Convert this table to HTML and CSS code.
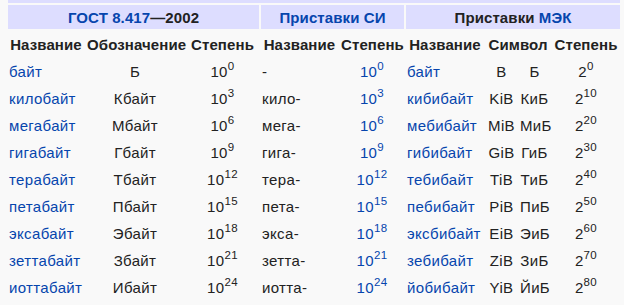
FILE: index.html
```html
<!DOCTYPE html>
<html lang="ru">
<head>
<meta charset="utf-8">
<link rel="stylesheet" href="styles.css">
</head>
<body>
<table class="units">
  <colgroup>
    <col class="c1"><col class="c2"><col class="c3"><col class="c4"><col class="c5"><col class="c6"><col class="c7"><col class="c8"><col class="c9">
  </colgroup>
  <tr class="strip"><th colspan="9"></th></tr>
  <tr class="group">
    <th colspan="3"><a href="#">ГОСТ 8.417</a>—2002</th>
    <th colspan="2"><a href="#">Приставки СИ</a></th>
    <th colspan="4">Приставки <a href="#">МЭК</a></th>
  </tr>
  <tr class="heads">
    <th>Название</th><th>Обозначение</th><th>Степень</th>
    <th>Название</th><th>Степень</th>
    <th>Название</th><th colspan="2">Символ</th><th>Степень</th>
  </tr>
  <tr>
    <td class="l"><a href="#">байт</a></td><td class="c">Б</td><td class="c">10<sup>0</sup></td>
    <td class="l">-</td><td class="c"><a href="#">10<sup>0</sup></a></td>
    <td class="l"><a href="#">байт</a></td><td class="c">B</td><td class="c">Б</td><td class="c">2<sup>0</sup></td>
  </tr>
  <tr>
    <td class="l"><a href="#">килобайт</a></td><td class="c">Кбайт</td><td class="c">10<sup>3</sup></td>
    <td class="l">кило-</td><td class="c"><a href="#">10<sup>3</sup></a></td>
    <td class="l"><a href="#">кибибайт</a></td><td class="c">KiB</td><td class="c">КиБ</td><td class="c">2<sup>10</sup></td>
  </tr>
  <tr>
    <td class="l"><a href="#">мегабайт</a></td><td class="c">Мбайт</td><td class="c">10<sup>6</sup></td>
    <td class="l">мега-</td><td class="c"><a href="#">10<sup>6</sup></a></td>
    <td class="l"><a href="#">мебибайт</a></td><td class="c">MiB</td><td class="c">МиБ</td><td class="c">2<sup>20</sup></td>
  </tr>
  <tr>
    <td class="l"><a href="#">гигабайт</a></td><td class="c">Гбайт</td><td class="c">10<sup>9</sup></td>
    <td class="l">гига-</td><td class="c"><a href="#">10<sup>9</sup></a></td>
    <td class="l"><a href="#">гибибайт</a></td><td class="c">GiB</td><td class="c">ГиБ</td><td class="c">2<sup>30</sup></td>
  </tr>
  <tr>
    <td class="l"><a href="#">терабайт</a></td><td class="c">Тбайт</td><td class="c">10<sup>12</sup></td>
    <td class="l">тера-</td><td class="c"><a href="#">10<sup>12</sup></a></td>
    <td class="l"><a href="#">тебибайт</a></td><td class="c">TiB</td><td class="c">ТиБ</td><td class="c">2<sup>40</sup></td>
  </tr>
  <tr>
    <td class="l"><a href="#">петабайт</a></td><td class="c">Пбайт</td><td class="c">10<sup>15</sup></td>
    <td class="l">пета-</td><td class="c"><a href="#">10<sup>15</sup></a></td>
    <td class="l"><a href="#">пебибайт</a></td><td class="c">PiB</td><td class="c">ПиБ</td><td class="c">2<sup>50</sup></td>
  </tr>
  <tr>
    <td class="l"><a href="#">эксабайт</a></td><td class="c">Эбайт</td><td class="c">10<sup>18</sup></td>
    <td class="l">экса-</td><td class="c"><a href="#">10<sup>18</sup></a></td>
    <td class="l"><a href="#">эксбибайт</a></td><td class="c">EiB</td><td class="c">ЭиБ</td><td class="c">2<sup>60</sup></td>
  </tr>
  <tr>
    <td class="l"><a href="#">зеттабайт</a></td><td class="c">Збайт</td><td class="c">10<sup>21</sup></td>
    <td class="l">зетта-</td><td class="c"><a href="#">10<sup>21</sup></a></td>
    <td class="l"><a href="#">зебибайт</a></td><td class="c">ZiB</td><td class="c">ЗиБ</td><td class="c">2<sup>70</sup></td>
  </tr>
  <tr>
    <td class="l"><a href="#">иоттабайт</a></td><td class="c">Ибайт</td><td class="c">10<sup>24</sup></td>
    <td class="l">иотта-</td><td class="c"><a href="#">10<sup>24</sup></a></td>
    <td class="l"><a href="#">йобибайт</a></td><td class="c">YiB</td><td class="c">ЙиБ</td><td class="c">2<sup>80</sup></td>
  </tr>
</table>
</body>
</html>
```

FILE: styles.css
```css
html, body {
  margin: 0;
  padding: 0;
  background: #f9f9f9;
}
body {
  font-family: "Liberation Sans", Arial, sans-serif;
  font-size: 15px;
  letter-spacing: 0.35px;
  color: #222;
}
a {
  color: #0645ad;
  text-decoration: none;
}
.units {
  margin: -2px 0 0 6px;
  width: 616px;
  table-layout: fixed;
  border-collapse: separate;
  border-spacing: 2px;
}
.c1 { width: 76px; }
.c2 { width: 98px; }
.c3 { width: 73px; }
.c4 { width: 77px; }
.c5 { width: 64px; }
.c6 { width: 78px; }
.c7 { width: 31px; }
.c8 { width: 31px; }
.c9 { width: 68px; }
.units th, .units td {
  padding: 0 1px;
  white-space: nowrap;
  line-height: 17px;
}
.units th {
  letter-spacing: 0.1px;
}
.strip th {
  height: 3px;
  background: #ddf;
  padding: 0;
}
.group th {
  background: #ddf;
  height: 24px;
  text-align: center;
  font-weight: bold;
}
.heads th {
  height: 26px;
  text-align: center;
  font-weight: bold;
}
.units td {
  height: 25px;
  vertical-align: middle;
}
.l { text-align: left; padding-left: 2px; }
.c { text-align: center; }
sup {
  font-size: 11.5px;
  line-height: 0;
  vertical-align: 7px;
}
```
